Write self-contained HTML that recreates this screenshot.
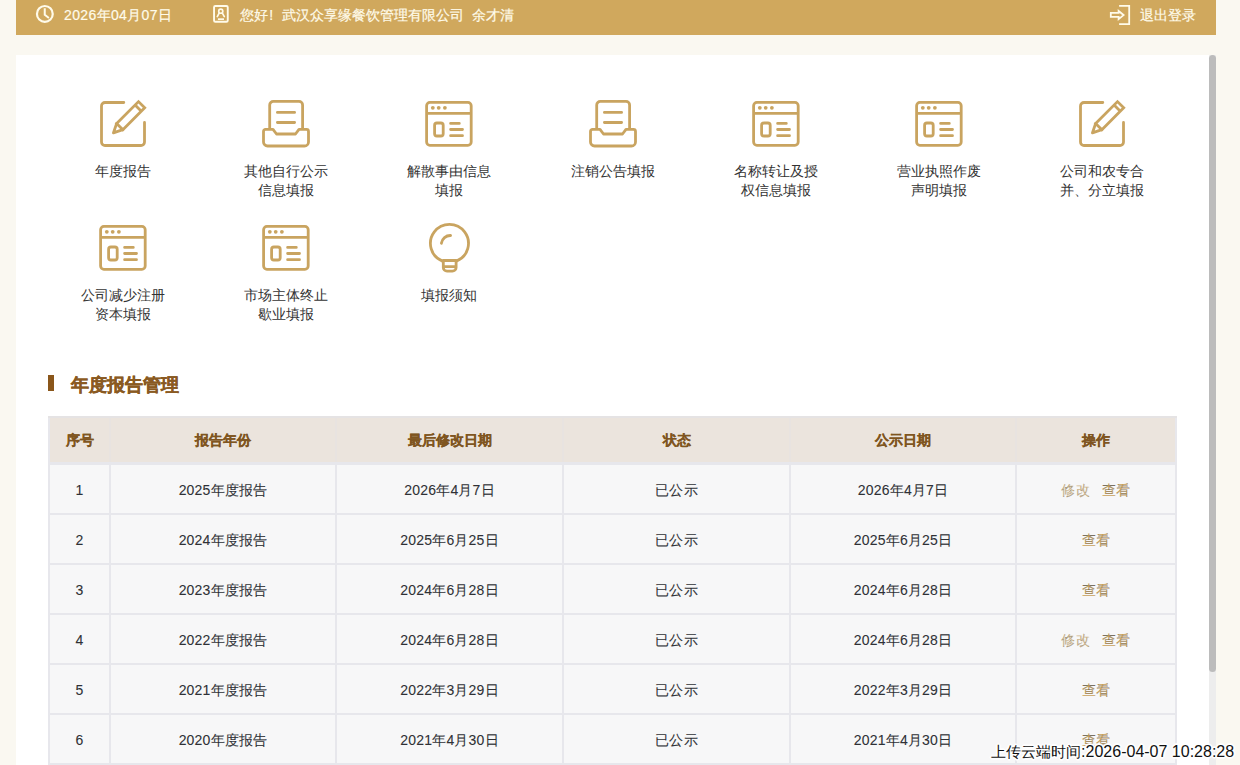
<!DOCTYPE html>
<html><head><meta charset="utf-8">
<style>
*{margin:0;padding:0;box-sizing:border-box}
html,body{width:1240px;height:765px;overflow:hidden;background:#faf8f1;font-family:"Liberation Sans",sans-serif;color:#333}
.hdr{position:absolute;left:16px;top:0;width:1200px;height:35px;background:#d0a85d;color:#fffbea;font-size:14px}
.hdr span{position:absolute;top:0;line-height:30px;white-space:nowrap;-webkit-text-stroke:0.2px #fffbea}
.hdr svg{position:absolute}
.panel{position:absolute;left:16px;top:55px;width:1193px;height:710px;background:#fff}
.sbtrack{position:absolute;left:1209px;top:55px;width:7px;height:710px;background:#ededed}
.sbthumb{position:absolute;left:1209px;top:55px;width:7px;height:617px;background:#bcbcbc;border-radius:4px}
.item{position:absolute;width:163px;text-align:center;font-size:14px;line-height:19px;color:#333}
.item svg{position:absolute;left:56px;top:0}
.item .lb{position:absolute;left:0;width:163px}
.ttl{position:absolute;left:48px;top:375px;width:6px;height:16px;background:#8a561a}
.ttltxt{position:absolute;left:71px;top:373px;font-size:18px;font-weight:bold;color:#8a5a22;line-height:24px;white-space:nowrap;-webkit-text-stroke:0.35px #8a5a22}
.tbl{position:absolute;left:48px;top:416px;width:1129px;height:349px;background:#e7e7ec}
.th{position:absolute;top:418px;height:44px;font-size:14px;font-weight:bold;color:#7f5520;text-align:center;line-height:44px;-webkit-text-stroke:0.2px #7f5520}
.td{position:absolute;height:48px;background:#f7f7f8;font-size:14px;text-align:center;line-height:50px;color:#2f3136;letter-spacing:0.2px;-webkit-text-stroke:0.08px #2f3136}
.op{color:#c8a15a}.op1{color:#d0b78e}
.stamp{position:absolute;left:990.5px;top:742px;font-size:16px;line-height:20px;color:#111;white-space:nowrap;text-shadow:1px 0 #fff,-1px 0 #fff,0 1px #fff,0 -1px #fff,1px 1px #fff,-1px -1px #fff,1px -1px #fff,-1px 1px #fff,2px 0 1px #fff,-2px 0 1px #fff,0 2px 1px #fff,0 -2px 1px #fff}
</style></head><body>
<div class="hdr">
  <svg style="left:19px;top:4px" width="20" height="20" viewBox="0 0 20 20"><circle cx="9.85" cy="9.9" r="7.9" fill="none" stroke="#fffbea" stroke-width="2.2"/><path d="M9.75 4.3 V10.8 L13.9 14" fill="none" stroke="#fffbea" stroke-width="2"/></svg>
  <span style="left:48px;letter-spacing:0.35px">2026年04月07日</span>
  <svg style="left:196px;top:4px" width="18" height="20" viewBox="0 0 18 20"><rect x="2.05" y="2" width="13.7" height="15.75" rx="1.3" fill="none" stroke="#fffbea" stroke-width="1.9"/><circle cx="8.75" cy="7.2" r="2.05" fill="none" stroke="#fffbea" stroke-width="1.7"/><path d="M7 9.4 L5.3 12.6 M10.5 9.4 L12.3 12.6" fill="none" stroke="#fffbea" stroke-width="1.7" stroke-linecap="round"/><path d="M5.9 15.15 H12" stroke="#fffbea" stroke-width="1.7"/></svg>
  <span style="left:224px">您好<span style="position:static;display:inline-block;width:14px;padding-left:1.3px">!</span>武汉众享缘餐饮管理有限公司&nbsp;&nbsp;余才清</span>
  <svg style="left:1093px;top:4px" width="22" height="22" viewBox="0 0 22 22"><path d="M10.1 1.9 H20.2 V20.15 H10.1" fill="none" stroke="#fffbea" stroke-width="1.8"/><path d="M1.8 8.85 H9.6 V7 L14.6 11.1 L9.6 15.2 V12.95 H1.8 Z" fill="none" stroke="#fffbea" stroke-width="1.8" stroke-linejoin="miter"/></svg>
  <span style="left:1124px">退出登录</span>
</div>
<div class="panel"></div>
<div class="sbtrack"></div>
<div class="sbthumb"></div>
<div class="item" style="left:42px;top:99px"><div class="ic"><svg width="50" height="50" viewBox="0 0 50 50" fill="none" stroke="#c9a460" stroke-width="2.8" stroke-linecap="round" stroke-linejoin="round">
<path d="M25.8 3.5 H7 a3.5 3.5 0 0 0 -3.5 3.5 V43 a3.5 3.5 0 0 0 3.5 3.5 H43 a3.5 3.5 0 0 0 3.5 -3.5 V23.5"/>
<path stroke-linejoin="miter" d="M18.65 24.43 L40.49 2.63 L46.71 8.85 L24.87 30.65 Z M37.09 6.02 L43.31 12.24"/><path d="M18.65 24.43 L15.4 33.9 L24.87 30.65"/></svg></div><div class="lb" style="left:-1px;top:63px">年度报告</div></div>
<div class="item" style="left:205px;top:99px"><div class="ic"><svg width="50" height="50" viewBox="0 0 50 50" fill="none" stroke="#c9a460" stroke-width="2.8" stroke-linecap="round" stroke-linejoin="round">
<path d="M8.7 29.4 V6 a3.6 3.6 0 0 1 3.6 -3.6 H38 a3.6 3.6 0 0 1 3.6 3.6 V29.4"/>
<path d="M16.4 13.4 H33.6 M16.4 23.5 H33.6"/>
<path d="M4.5 30.4 H12 L15.5 35 H34.5 L38 30.4 H45.5 a2 2 0 0 1 2 2 V43 a4 4 0 0 1 -4 4 H6.5 a4 4 0 0 1 -4 -4 V32.4 a2 2 0 0 1 2 -2 Z"/></svg></div><div class="lb" style="left:-1px;top:63px">其他自行公示<br>信息填报</div></div>
<div class="item" style="left:368px;top:99px"><div class="ic"><svg width="50" height="50" viewBox="0 0 50 50" fill="none" stroke="#c9a460" stroke-width="2.8" stroke-linecap="round" stroke-linejoin="round">
<rect x="2.6" y="3.4" width="44.6" height="42.9" rx="3.3"/>
<path d="M2.6 14.3 H47.2" stroke-linecap="butt"/>
<rect x="10.6" y="24" width="8.6" height="13" rx="2.3"/>
<path d="M26.6 24.4 H35.3 M26.6 30.5 H38.5 M26.6 36.7 H38.5"/>
<circle cx="8.8" cy="8.8" r="1.9" fill="#c9a460" stroke="none"/><circle cx="14.7" cy="8.8" r="1.9" fill="#c9a460" stroke="none"/><circle cx="20.9" cy="8.8" r="1.9" fill="#c9a460" stroke="none"/></svg></div><div class="lb" style="left:-1px;top:63px">解散事由信息<br>填报</div></div>
<div class="item" style="left:532px;top:99px"><div class="ic"><svg width="50" height="50" viewBox="0 0 50 50" fill="none" stroke="#c9a460" stroke-width="2.8" stroke-linecap="round" stroke-linejoin="round">
<path d="M8.7 29.4 V6 a3.6 3.6 0 0 1 3.6 -3.6 H38 a3.6 3.6 0 0 1 3.6 3.6 V29.4"/>
<path d="M16.4 13.4 H33.6 M16.4 23.5 H33.6"/>
<path d="M4.5 30.4 H12 L15.5 35 H34.5 L38 30.4 H45.5 a2 2 0 0 1 2 2 V43 a4 4 0 0 1 -4 4 H6.5 a4 4 0 0 1 -4 -4 V32.4 a2 2 0 0 1 2 -2 Z"/></svg></div><div class="lb" style="left:-1px;top:63px">注销公告填报</div></div>
<div class="item" style="left:695px;top:99px"><div class="ic"><svg width="50" height="50" viewBox="0 0 50 50" fill="none" stroke="#c9a460" stroke-width="2.8" stroke-linecap="round" stroke-linejoin="round">
<rect x="2.6" y="3.4" width="44.6" height="42.9" rx="3.3"/>
<path d="M2.6 14.3 H47.2" stroke-linecap="butt"/>
<rect x="10.6" y="24" width="8.6" height="13" rx="2.3"/>
<path d="M26.6 24.4 H35.3 M26.6 30.5 H38.5 M26.6 36.7 H38.5"/>
<circle cx="8.8" cy="8.8" r="1.9" fill="#c9a460" stroke="none"/><circle cx="14.7" cy="8.8" r="1.9" fill="#c9a460" stroke="none"/><circle cx="20.9" cy="8.8" r="1.9" fill="#c9a460" stroke="none"/></svg></div><div class="lb" style="left:-1px;top:63px">名称转让及授<br>权信息填报</div></div>
<div class="item" style="left:858px;top:99px"><div class="ic"><svg width="50" height="50" viewBox="0 0 50 50" fill="none" stroke="#c9a460" stroke-width="2.8" stroke-linecap="round" stroke-linejoin="round">
<rect x="2.6" y="3.4" width="44.6" height="42.9" rx="3.3"/>
<path d="M2.6 14.3 H47.2" stroke-linecap="butt"/>
<rect x="10.6" y="24" width="8.6" height="13" rx="2.3"/>
<path d="M26.6 24.4 H35.3 M26.6 30.5 H38.5 M26.6 36.7 H38.5"/>
<circle cx="8.8" cy="8.8" r="1.9" fill="#c9a460" stroke="none"/><circle cx="14.7" cy="8.8" r="1.9" fill="#c9a460" stroke="none"/><circle cx="20.9" cy="8.8" r="1.9" fill="#c9a460" stroke="none"/></svg></div><div class="lb" style="left:-1px;top:63px">营业执照作废<br>声明填报</div></div>
<div class="item" style="left:1021px;top:99px"><div class="ic"><svg width="50" height="50" viewBox="0 0 50 50" fill="none" stroke="#c9a460" stroke-width="2.8" stroke-linecap="round" stroke-linejoin="round">
<path d="M25.8 3.5 H7 a3.5 3.5 0 0 0 -3.5 3.5 V43 a3.5 3.5 0 0 0 3.5 3.5 H43 a3.5 3.5 0 0 0 3.5 -3.5 V23.5"/>
<path stroke-linejoin="miter" d="M18.65 24.43 L40.49 2.63 L46.71 8.85 L24.87 30.65 Z M37.09 6.02 L43.31 12.24"/><path d="M18.65 24.43 L15.4 33.9 L24.87 30.65"/></svg></div><div class="lb" style="left:-1px;top:63px">公司和农专合<br>并、分立填报</div></div>
<div class="item" style="left:42px;top:223px"><div class="ic"><svg width="50" height="50" viewBox="0 0 50 50" fill="none" stroke="#c9a460" stroke-width="2.8" stroke-linecap="round" stroke-linejoin="round">
<rect x="2.6" y="3.4" width="44.6" height="42.9" rx="3.3"/>
<path d="M2.6 14.3 H47.2" stroke-linecap="butt"/>
<rect x="10.6" y="24" width="8.6" height="13" rx="2.3"/>
<path d="M26.6 24.4 H35.3 M26.6 30.5 H38.5 M26.6 36.7 H38.5"/>
<circle cx="8.8" cy="8.8" r="1.9" fill="#c9a460" stroke="none"/><circle cx="14.7" cy="8.8" r="1.9" fill="#c9a460" stroke="none"/><circle cx="20.9" cy="8.8" r="1.9" fill="#c9a460" stroke="none"/></svg></div><div class="lb" style="left:-1px;top:63px">公司减少注册<br>资本填报</div></div>
<div class="item" style="left:205px;top:223px"><div class="ic"><svg width="50" height="50" viewBox="0 0 50 50" fill="none" stroke="#c9a460" stroke-width="2.8" stroke-linecap="round" stroke-linejoin="round">
<rect x="2.6" y="3.4" width="44.6" height="42.9" rx="3.3"/>
<path d="M2.6 14.3 H47.2" stroke-linecap="butt"/>
<rect x="10.6" y="24" width="8.6" height="13" rx="2.3"/>
<path d="M26.6 24.4 H35.3 M26.6 30.5 H38.5 M26.6 36.7 H38.5"/>
<circle cx="8.8" cy="8.8" r="1.9" fill="#c9a460" stroke="none"/><circle cx="14.7" cy="8.8" r="1.9" fill="#c9a460" stroke="none"/><circle cx="20.9" cy="8.8" r="1.9" fill="#c9a460" stroke="none"/></svg></div><div class="lb" style="left:-1px;top:63px">市场主体终止<br>歇业填报</div></div>
<div class="item" style="left:368px;top:223px"><div class="ic"><svg width="50" height="56" viewBox="0 0 50 56" fill="none" stroke="#c9a460" stroke-width="2.8" stroke-linecap="round" stroke-linejoin="round">
<path d="M18.45 38.1 A19 19 0 1 1 32.45 38.1"/>
<path d="M19.3 37.5 V44.5 a3.7 3.7 0 0 0 3.7 3.7 H28.4 a3.7 3.7 0 0 0 3.7 -3.7 V37.5 Z M19.3 43.6 H32.1"/>
<path d="M17.4 20.3 A9 9 0 0 1 26.6 12.5"/></svg></div><div class="lb" style="left:-1px;top:63px">填报须知</div></div>
<div class="ttl"></div>
<div class="ttltxt">年度报告管理</div>
<div class="tbl"></div>
<div style="position:absolute;left:50px;top:418px;width:1125px;height:44px;background:#ebe4dd"></div>
<div style="position:absolute;left:109px;top:418px;width:2px;height:44px;background:#e8e3e0"></div>
<div style="position:absolute;left:335px;top:418px;width:2px;height:44px;background:#e8e3e0"></div>
<div style="position:absolute;left:562px;top:418px;width:2px;height:44px;background:#e8e3e0"></div>
<div style="position:absolute;left:789px;top:418px;width:2px;height:44px;background:#e8e3e0"></div>
<div style="position:absolute;left:1015px;top:418px;width:2px;height:44px;background:#e8e3e0"></div>
<div style="position:absolute;left:48px;top:416px;width:1129px;height:2px;background:#e5e3e4"></div>
<div class="th" style="left:50px;width:59px">序号</div>
<div class="th" style="left:111px;width:224px">报告年份</div>
<div class="th" style="left:337px;width:225px">最后修改日期</div>
<div class="th" style="left:564px;width:225px">状态</div>
<div class="th" style="left:791px;width:224px">公示日期</div>
<div class="th" style="left:1017px;width:158px">操作</div>
<div class="td" style="left:50px;top:465px;width:59px">1</div>
<div class="td" style="left:111px;top:465px;width:224px">2025年度报告</div>
<div class="td" style="left:337px;top:465px;width:225px">2026年4月7日</div>
<div class="td" style="left:564px;top:465px;width:225px">已公示</div>
<div class="td" style="left:791px;top:465px;width:224px">2026年4月7日</div>
<div class="td" style="left:1017px;top:465px;width:158px"><span class="op1">修改</span>&nbsp;&nbsp;&nbsp;<span class="op">查看</span></div>
<div class="td" style="left:50px;top:515px;width:59px">2</div>
<div class="td" style="left:111px;top:515px;width:224px">2024年度报告</div>
<div class="td" style="left:337px;top:515px;width:225px">2025年6月25日</div>
<div class="td" style="left:564px;top:515px;width:225px">已公示</div>
<div class="td" style="left:791px;top:515px;width:224px">2025年6月25日</div>
<div class="td" style="left:1017px;top:515px;width:158px"><span class="op">查看</span></div>
<div class="td" style="left:50px;top:565px;width:59px">3</div>
<div class="td" style="left:111px;top:565px;width:224px">2023年度报告</div>
<div class="td" style="left:337px;top:565px;width:225px">2024年6月28日</div>
<div class="td" style="left:564px;top:565px;width:225px">已公示</div>
<div class="td" style="left:791px;top:565px;width:224px">2024年6月28日</div>
<div class="td" style="left:1017px;top:565px;width:158px"><span class="op">查看</span></div>
<div class="td" style="left:50px;top:615px;width:59px">4</div>
<div class="td" style="left:111px;top:615px;width:224px">2022年度报告</div>
<div class="td" style="left:337px;top:615px;width:225px">2024年6月28日</div>
<div class="td" style="left:564px;top:615px;width:225px">已公示</div>
<div class="td" style="left:791px;top:615px;width:224px">2024年6月28日</div>
<div class="td" style="left:1017px;top:615px;width:158px"><span class="op1">修改</span>&nbsp;&nbsp;&nbsp;<span class="op">查看</span></div>
<div class="td" style="left:50px;top:665px;width:59px">5</div>
<div class="td" style="left:111px;top:665px;width:224px">2021年度报告</div>
<div class="td" style="left:337px;top:665px;width:225px">2022年3月29日</div>
<div class="td" style="left:564px;top:665px;width:225px">已公示</div>
<div class="td" style="left:791px;top:665px;width:224px">2022年3月29日</div>
<div class="td" style="left:1017px;top:665px;width:158px"><span class="op">查看</span></div>
<div class="td" style="left:50px;top:715px;width:59px">6</div>
<div class="td" style="left:111px;top:715px;width:224px">2020年度报告</div>
<div class="td" style="left:337px;top:715px;width:225px">2021年4月30日</div>
<div class="td" style="left:564px;top:715px;width:225px">已公示</div>
<div class="td" style="left:791px;top:715px;width:224px">2021年4月30日</div>
<div class="td" style="left:1017px;top:715px;width:158px"><span class="op">查看</span></div>
<div class="stamp"><span style="font-size:15px;letter-spacing:0.1px">上传云端时间</span>:2026-04-07 10:28:28</div>
</body></html>
